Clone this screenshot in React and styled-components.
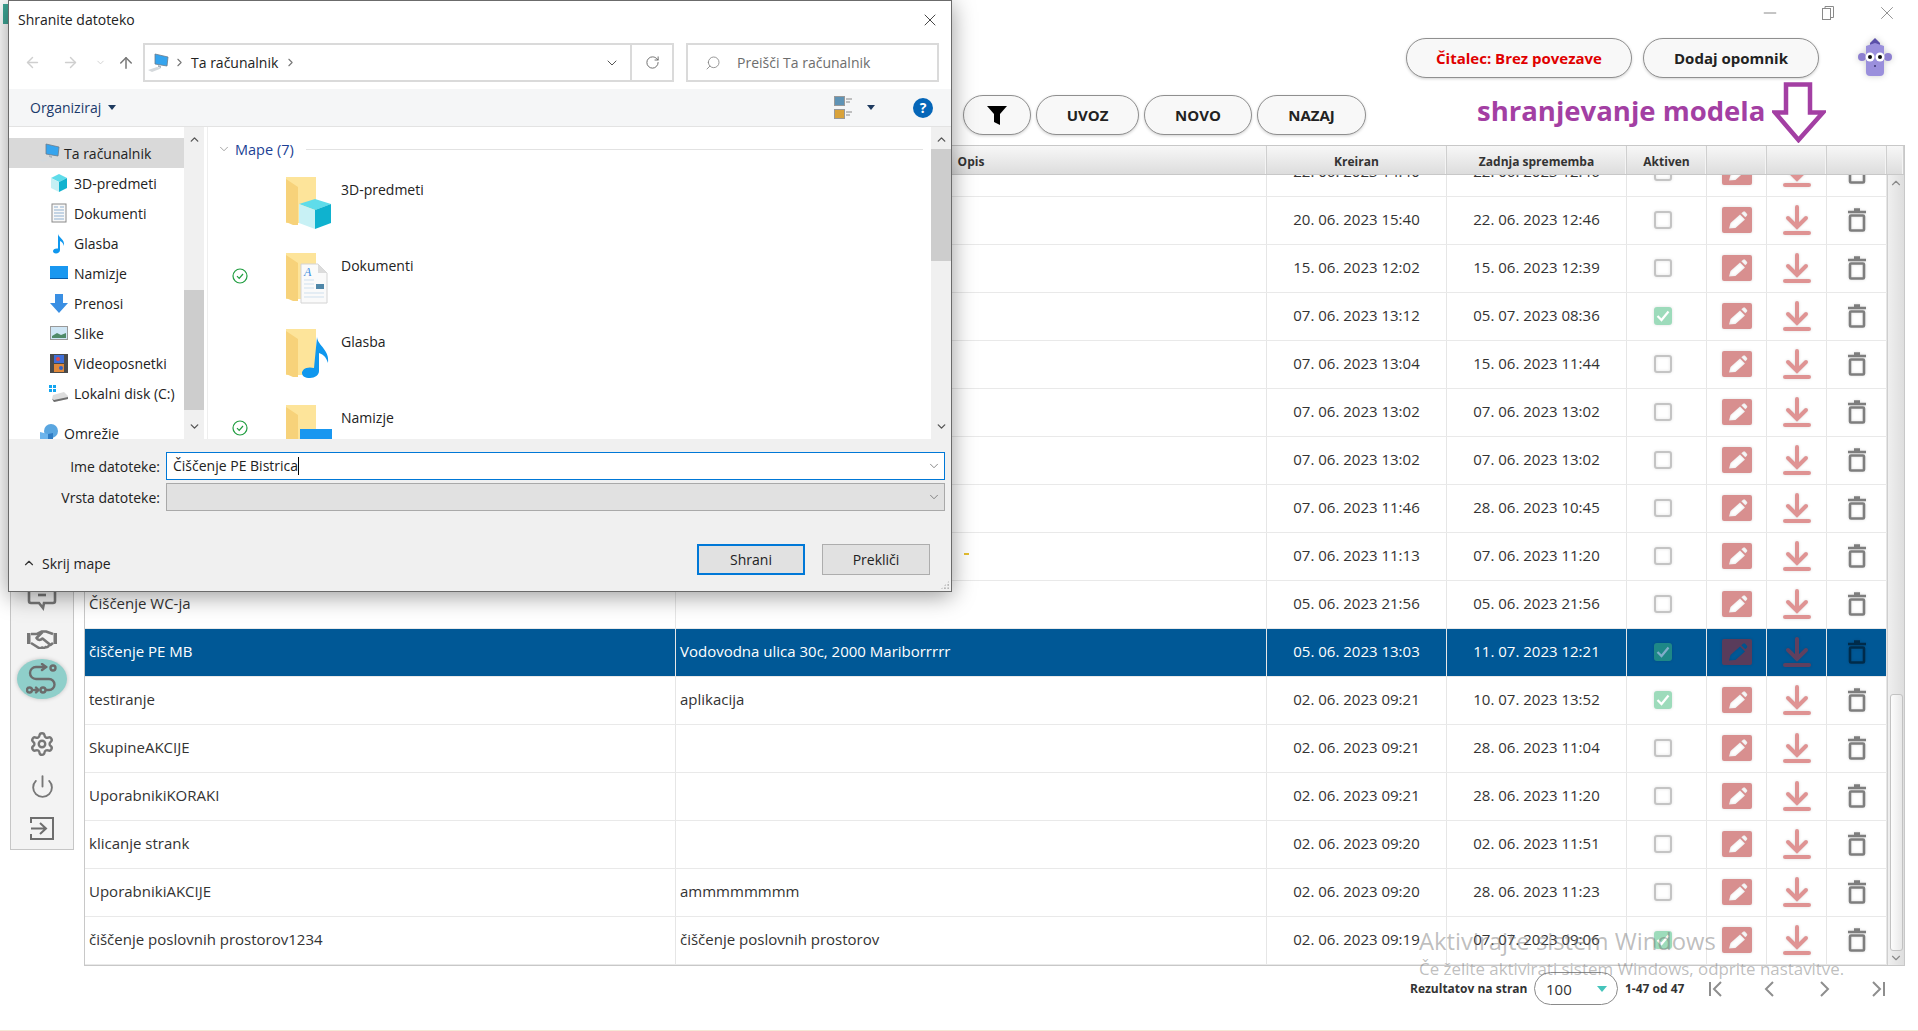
import styled, { createGlobalStyle } from "styled-components";
import { ArrowLeft, ArrowRight, ArrowUp, ChevronDown, ChevronUp, ChevronRight, RotateCw, Search, X, Minus, Settings, Power } from "lucide-react";

const rows = [
  { created: "22. 06. 2023 14:40", changed: "22. 06. 2023 12:46" },
  { created: "20. 06. 2023 15:40", changed: "22. 06. 2023 12:46" },
  { created: "15. 06. 2023 12:02", changed: "15. 06. 2023 12:39" },
  { created: "07. 06. 2023 13:12", changed: "05. 07. 2023 08:36", active: true },
  { created: "07. 06. 2023 13:04", changed: "15. 06. 2023 11:44" },
  { created: "07. 06. 2023 13:02", changed: "07. 06. 2023 13:02" },
  { created: "07. 06. 2023 13:02", changed: "07. 06. 2023 13:02" },
  { created: "07. 06. 2023 11:46", changed: "28. 06. 2023 10:45" },
  { created: "07. 06. 2023 11:13", changed: "07. 06. 2023 11:20" },
  { name: "Čiščenje WC-ja", created: "05. 06. 2023 21:56", changed: "05. 06. 2023 21:56" },
  { name: "čiščenje PE MB", desc: "Vodovodna ulica 30c, 2000 Mariborrrrr", created: "05. 06. 2023 13:03", changed: "11. 07. 2023 12:21", active: true, selected: true },
  { name: "testiranje", desc: "aplikacija", created: "02. 06. 2023 09:21", changed: "10. 07. 2023 13:52", active: true },
  { name: "SkupineAKCIJE", created: "02. 06. 2023 09:21", changed: "28. 06. 2023 11:04" },
  { name: "UporabnikiKORAKI", created: "02. 06. 2023 09:21", changed: "28. 06. 2023 11:20" },
  { name: "klicanje strank", created: "02. 06. 2023 09:20", changed: "02. 06. 2023 11:51" },
  { name: "UporabnikiAKCIJE", desc: "ammmmmmmm", created: "02. 06. 2023 09:20", changed: "28. 06. 2023 11:23" },
  { name: "čiščenje poslovnih prostorov1234", desc: "čiščenje poslovnih prostorov", created: "02. 06. 2023 09:19", changed: "07. 07. 2023 09:06", active: true },
];

const navItems = [
  { label: "Ta računalnik", icon: "computer", top: true, current: true },
  { label: "3D-predmeti", icon: "cube" },
  { label: "Dokumenti", icon: "doc" },
  { label: "Glasba", icon: "note" },
  { label: "Namizje", icon: "desktop" },
  { label: "Prenosi", icon: "download" },
  { label: "Slike", icon: "image" },
  { label: "Videoposnetki", icon: "film" },
  { label: "Lokalni disk (C:)", icon: "disk" },
  { label: "Omrežie", icon: "network", top: true, spaced: true },
];

const folders = [
  { label: "3D-predmeti", kind: "cube" },
  { label: "Dokumenti", kind: "doc", synced: true },
  { label: "Glasba", kind: "note" },
  { label: "Namizje", kind: "desktop", synced: true },
];

const NavIcon = ({ kind }) => {
  switch (kind) {
    case "computer":
      return (
        <svg width="22" height="20" viewBox="0 0 22 20">
          <path d="M8 1l13 3-1 9-12-2z" fill="#35a4ee" stroke="#6d7c8a" strokeWidth="0.8" />
          <path d="M11 12l3 1v2l-3-1z" fill="#a9b4bd" />
          <path d="M1 17l9-3 4 1.500-9 3.500z" fill="#d5d9dc" />
        </svg>
      );
    case "cube":
      return (
        <svg width="20" height="20" viewBox="0 0 20 20">
          <path d="M10 1l8 4-8 4-8-4z" fill="#5fdcea" />
          <path d="M2 5l8 4v10l-8-4z" fill="#c5f0f4" />
          <path d="M18 5l-8 4v10l8-4z" fill="#10b3cf" />
        </svg>
      );
    case "doc":
      return (
        <svg width="16" height="20" viewBox="0 0 16 20">
          <rect x="1" y="1" width="14" height="18" fill="#f8f8f8" stroke="#8a8a8a" />
          <path d="M3 4h4M9 4h4M3 7h10M3 10h10M3 13h10M3 16h10" stroke="#8fb0d0" />
        </svg>
      );
    case "note":
      return (
        <svg width="14" height="21" viewBox="0 0 14 21">
          <path d="M6 1c1 4 7 5 6 12-1-3-2-4-4-5v9c0 2-2 3.500-4 3.500s-3-1-3-2.500 2-3 5-2.500z" fill="#0f97ee" />
        </svg>
      );
    case "desktop":
      return (
        <svg width="19" height="14" viewBox="0 0 19 14">
          <rect width="18" height="13" fill="#1997f0" />
          <rect y="12" width="18" height="1" fill="#0a5ca8" />
        </svg>
      );
    case "download":
      return (
        <svg width="18" height="19" viewBox="0 0 18 19">
          <path d="M5 0h8v9h5l-9 10-9-10h5z" fill="#3a8fe3" />
        </svg>
      );
    case "image":
      return (
        <svg width="18" height="14" viewBox="0 0 18 14">
          <rect x="0.500" y="0.500" width="17" height="13" fill="#cfe6f5" stroke="#999" />
          <path d="M2 10l5-3 4 2 5-2v5H2z" fill="#4f8a68" />
        </svg>
      );
    case "film":
      return (
        <svg width="18" height="19" viewBox="0 0 18 19">
          <rect width="18" height="19" fill="#4a4a4a" />
          <rect x="4" y="1" width="10" height="8" fill="#3f6fd8" />
          <rect x="4" y="10" width="10" height="8" fill="#e0883a" />
          <circle cx="8" cy="5" r="2" fill="#e04a4a" />
          <circle cx="11" cy="14" r="2" fill="#2f62c8" />
        </svg>
      );
    case "disk":
      return (
        <svg width="20" height="17" viewBox="0 0 20 17">
          <path d="M0 0h3v3H0zM4 0h3v3H4zM0 4h3v3H0zM4 4h3v3H4z" fill="#12a5f0" />
          <path d="M4 10l11-3 4 4v3l-14 3-2-3z" fill="#dcdcdc" />
          <path d="M3 14l2 3 14-3v-2l-14 3z" fill="#6e6e6e" />
        </svg>
      );
    default:
      return (
        <svg width="20" height="20" viewBox="0 0 20 20">
          <circle cx="12" cy="8" r="7" fill="#5aa6e0" />
          <path d="M1 9l8 2v8l-8-3z" fill="#6cb4ec" />
          <path d="M9 11l5-1v7l-5 2z" fill="#2f7cc4" />
        </svg>
      );
  }
};

const FolderIcon = ({ kind }) => (
  <svg width="50" height="52" viewBox="0 0 50 52">
    <rect x="1" y="0" width="30" height="46" fill="#fde49a" />
    <path d="M1 0l12 8v38H8l-7-3z" fill="#f7d27a" transform="translate(0 2)" />
    {kind === "cube" && (
      <g>
        <path d="M30 22l16 5-16 6-16-6z" fill="#5fdcea" />
        <path d="M14 27l16 6v19l-16-6z" fill="#c8f1f5" />
        <path d="M46 27l-16 6v19l16-6z" fill="#0fb2cf" />
      </g>
    )}
    {kind === "doc" && (
      <g>
        <path d="M16 11h17l9 9v30H16z" fill="#fafafa" stroke="#d4d4d4" />
        <path d="M33 11l9 9h-9z" fill="#dcdcdc" />
        <text x="19" y="23" fontSize="12" fontStyle="italic" fontFamily="Liberation Serif, serif" fill="#3f8ee0">A</text>
        <path d="M31 31h8v5h-8z" fill="#4f87a8" />
        <path d="M19 27h10M19 31h10M19 35h10M19 40h20M19 44h20" stroke="#cfe0ee" />
      </g>
    )}
    {kind === "note" && (
      <path d="M32 8c1 9 13 13 11 26-2-6-4-8-9-10v18c0 4-4 7-9 7s-8-2-8-5 4-7 12-5z" fill="#0f97ee" />
    )}
    {kind === "desktop" && <rect x="15" y="24" width="32" height="28" fill="#1997f0" />}
  </svg>
);

const SyncedIcon = () => (
  <svg width="16" height="16" viewBox="0 0 16 16">
    <circle cx="8" cy="8" r="7" fill="none" stroke="#1f9d3f" strokeWidth="1.200" />
    <path d="M5 8.200l2.200 2.200L11 6" fill="none" stroke="#1f9d3f" strokeWidth="1.200" />
  </svg>
);

const EditIcon = () => (
  <svg width="30" height="26" viewBox="0 0 30 26">
    <path
      fillRule="evenodd"
      fill="#b22222"
      d="M2 0h26a2 2 0 0 1 2 2v22a2 2 0 0 1-2 2H2a2 2 0 0 1-2-2V2a2 2 0 0 1 2-2zM7 21.500l1.500-5.500 9.500-8.500 5 5-9.500 8.500zM19.300 6.300l1.800-1.500a1.500 1.500 0 0 1 2 0l1.800 1.900a1.500 1.500 0 0 1 0 2l-1.600 1.500z"
    />
  </svg>
);

const DownloadIcon = () => (
  <svg width="28" height="30" viewBox="0 0 28 30">
    <path d="M14 2v20M5 13l9 9 9-9" fill="none" stroke="#c02a2a" strokeWidth="4" strokeLinecap="round" />
    <path d="M2 28h24" fill="none" stroke="#c02a2a" strokeWidth="4" strokeLinecap="round" />
  </svg>
);

const TrashIcon = () => (
  <svg width="18" height="24" viewBox="0 0 18 24">
    <path d="M6 1.500h6M0 4h18" stroke="#000" strokeWidth="2.400" />
    <rect x="2" y="7.500" width="14" height="15" rx="1" fill="none" stroke="#000" strokeWidth="2.600" />
  </svg>
);

const FunnelIcon = () => (
  <svg width="20" height="19" viewBox="0 0 20 19">
    <path d="M0 0h20l-7 8v11l-6-3V8z" fill="#000" />
  </svg>
);

const RestoreIcon = () => (
  <svg width="12" height="14" viewBox="0 0 12 14" fill="none" stroke="#8a8a8a">
    <rect x="0.500" y="2.500" width="8" height="11" />
    <path d="M3 2.500v-2h8.500v11h-3" />
  </svg>
);

const CommentIcon = () => (
  <svg width="30" height="24" viewBox="0 0 30 24" fill="none" stroke="#777" strokeWidth="2.600">
    <path d="M2 1v13a2 2 0 0 0 2 2h8l4 5 1-5h9a2 2 0 0 0 2-2V1" />
    <path d="M11 8h8" />
  </svg>
);

const HandshakeIcon = () => (
  <svg width="30" height="19" viewBox="0 0 30 19" fill="none" stroke="#777" strokeWidth="2.600" strokeLinejoin="round">
    <path d="M0 3h3.500v11H0zM30 3h-3.500v11H30z" fill="#777" stroke="none" />
    <path d="M4 4h6l5-2.500h4l7 2.500" />
    <path d="M15.500 2L9.500 8c1.500 2.500 4 2.500 6 .5l8 6.500 2.500-2" />
    <path d="M4 13l8 5c1 .5 2.500 0 3-.5 1 .5 3 .5 3.500-.5 1.500.5 3 0 3.500-2" />
  </svg>
);

const RouteIcon = () => (
  <svg width="32" height="32" viewBox="0 0 32 32" fill="none" stroke="#6b6b6b" strokeWidth="2.400" strokeLinecap="round">
    <path d="M20 4H10a6 6 0 0 0 0 12h13a5 5 0 0 1 0 11h-3" />
    <path d="M16 1l4 3-4 3" />
    <circle cx="27" cy="5" r="2.500" />
    <circle cx="17" cy="27" r="2.500" />
    <circle cx="3.500" cy="27" r="2.500" />
    <path d="M8 27h3M10 24.500l2.500 2.500-2.500 2.500" />
  </svg>
);

const ExitIcon = () => (
  <svg width="24" height="23" viewBox="0 0 24 23" fill="none" stroke="#6e6e6e" strokeWidth="2">
    <path d="M1 6V1h22v21H1v-5" />
    <path d="M1 11.500h14M10 6l6 5.500-6 5.500" />
  </svg>
);

const PagerIcon = ({ d }) => (
  <svg width="16" height="16" viewBox="0 0 16 16" fill="none" stroke="#8e8e8e" strokeWidth="2">
    <path d={d} />
  </svg>
);

const App = () => (
  <Page>
    <GlobalStyle />
    <AppEdge />
    <Sidebar>
      <SideSlot>
        <CommentIcon />
      </SideSlot>
      <SideSlot>
        <HandshakeIcon />
      </SideSlot>
      <SideSlot>
        <ActiveBubble>
          <RouteIcon />
        </ActiveBubble>
      </SideSlot>
      <SideGap />
      <SideSlot $tall>
        <Settings size={26} color="#777" strokeWidth={2.200} />
      </SideSlot>
      <SideSlot $tall>
        <Power size={25} color="#777" strokeWidth={1.800} />
      </SideSlot>
      <SideSlot $tall>
        <ExitIcon />
      </SideSlot>
    </Sidebar>

    <Main>
      <WindowBar>
        <Minus size={20} color="#8a8a8a" strokeWidth={1.200} />
        <RestoreIcon />
        <X size={22} color="#8a8a8a" strokeWidth={1} />
      </WindowBar>

      <HeaderRow>
        <Pill $width={226} $red>
          Čitalec: Brez povezave
        </Pill>
        <Pill $width={176}>Dodaj opomnik</Pill>
        <Mascot>
          <svg width="34" height="38" viewBox="0 0 34 38">
            <path d="M17 0l5 5v3H12V5z" fill="#5b4fa8" />
            <circle cx="4" cy="19" r="4" fill="#8d7fd0" />
            <circle cx="30" cy="19" r="4" fill="#8d7fd0" />
            <path d="M8 8l9-3 9 3v26a4 4 0 0 1-4 4H12a4 4 0 0 1-4-4z" fill="#9a8fdc" />
            <circle cx="12" cy="19" r="4.500" fill="#fff" />
            <circle cx="22" cy="19" r="4.500" fill="#fff" />
            <circle cx="12" cy="19" r="2" fill="#111" />
            <circle cx="22" cy="19" r="2" fill="#111" />
            <path d="M16 28h2" stroke="#3a3370" strokeWidth="1.500" />
          </svg>
        </Mascot>
      </HeaderRow>

      <ActionsRow>
        <Pill $width={68}>
          <FunnelIcon />
        </Pill>
        <Pill $width={103}>UVOZ</Pill>
        <Pill $width={108}>NOVO</Pill>
        <Pill $width={109}>NAZAJ</Pill>
        <Annotation>shranjevanje modela</Annotation>
        <svg width="54" height="61" viewBox="0 0 54 61">
          <path d="M14 2.500h24v28h13L26.500 58 3 30.500h11z" fill="none" stroke="#a33fa3" strokeWidth="4.500" />
        </svg>
      </ActionsRow>

      <TableBox>
        <TableHead>
          <HeadCell />
          <HeadCell>Opis</HeadCell>
          <HeadCell>Kreiran</HeadCell>
          <HeadCell>Zadnja sprememba</HeadCell>
          <HeadCell>Aktiven</HeadCell>
          <HeadCell />
          <HeadCell />
          <HeadCell />
          <HeadCell />
        </TableHead>
        <TableBody>
          <RowsClip>
            <RowsList>
              {rows.map((row, i) => (
                <Row key={i} $selected={row.selected}>
                  <TextCell>{row.name}</TextCell>
                  <TextCell>{row.desc}</TextCell>
                  <DateCell>{row.created}</DateCell>
                  <DateCell>{row.changed}</DateCell>
                  <IconCell>
                    <CheckBox $checked={row.active}>
                      {row.active && (
                        <svg width="14" height="12" viewBox="0 0 14 12">
                          <path d="M1.500 6l4 4 7-8.500" fill="none" stroke="#fff" strokeWidth="2.200" />
                        </svg>
                      )}
                    </CheckBox>
                  </IconCell>
                  <IconCell>
                    <EditIcon />
                  </IconCell>
                  <IconCell>
                    <DownloadIcon />
                  </IconCell>
                  <IconCell>
                    <TrashIcon />
                  </IconCell>
                </Row>
              ))}
            </RowsList>
          </RowsClip>
          <ScrollTrack>
            <ChevronUp size={14} color="#8a8a8a" />
            <ScrollThumb />
            <ChevronDown size={14} color="#8a8a8a" />
          </ScrollTrack>
        </TableBody>
      </TableBox>

      <Pager>
        <PagerLabel>Rezultatov na stran</PagerLabel>
        <PageSize>
          100
          <PageSizeArrow />
        </PageSize>
        <PagerCount>1-47 od 47</PagerCount>
        <PagerButtons>
          <PagerIcon d="M2 1v14M13 1L6 8l7 7" />
          <PagerIcon d="M11 1L4 8l7 7" />
          <PagerIcon d="M5 1l7 7-7 7" />
          <PagerIcon d="M3 1l7 7-7 7M14 1v14" />
        </PagerButtons>
      </Pager>
    </Main>

    <StrayMark />

    <Watermark>
      <WatermarkTitle>Aktivirajte sistem Windows</WatermarkTitle>
      <WatermarkText>Če želite aktivirati sistem Windows, odprite nastavitve.</WatermarkText>
    </Watermark>

    <Dialog>
      <DialogTitle>
        Shranite datoteko
        <X size={20} color="#222" strokeWidth={1} />
      </DialogTitle>

      <AddressRow>
        <NavArrows>
          <ArrowLeft size={17} color="#cfcfcf" />
          <ArrowRight size={17} color="#cfcfcf" />
          <ChevronDown size={11} color="#cfcfcf" />
          <ArrowUp size={18} color="#777" />
        </NavArrows>
        <AddressBox>
          <NavIcon kind="computer" />
          <ChevronRight size={13} color="#777" />
          <AddressText>Ta računalnik</AddressText>
          <ChevronRight size={13} color="#777" />
          <AddressChevron>
            <ChevronDown size={16} color="#555" strokeWidth={1.500} />
          </AddressChevron>
          <AddressRefresh>
            <RotateCw size={15} color="#666" strokeWidth={1.500} />
          </AddressRefresh>
        </AddressBox>
        <SearchBox>
          <Search size={16} color="#888" strokeWidth={1.300} style={{ transform: "scaleX(-1)" }} />
          Preišči Ta računalnik
        </SearchBox>
      </AddressRow>

      <DialogToolbar>
        <Organize>
          Organiziraj <Caret />
        </Organize>
        <ToolbarRight>
          <svg width="19" height="24" viewBox="0 0 19 24">
            <rect x="0.500" y="0.500" width="10" height="9" fill="#5f93b5" stroke="#999" />
            <rect x="0.500" y="13.500" width="10" height="9" fill="#d9a23a" stroke="#999" />
            <path d="M12 3h6M12 6h4M12 16h6M12 19h4" stroke="#888" />
          </svg>
          <Caret />
          <HelpBadge>?</HelpBadge>
        </ToolbarRight>
      </DialogToolbar>

      <Panels>
        <NavPane>
          {navItems.map((item) => (
            <NavRow key={item.label} $top={item.top} $current={item.current} $spaced={item.spaced}>
              <NavIconSlot>
                <NavIcon kind={item.icon} />
              </NavIconSlot>
              {item.label}
            </NavRow>
          ))}
        </NavPane>
        <PaneScroll>
          <ChevronUp size={13} color="#555" strokeWidth={2.500} />
          <PaneThumb $top={144} $height={120} />
          <ChevronDown size={13} color="#555" strokeWidth={2.500} />
        </PaneScroll>
        <FolderPane>
          <GroupTitle>
            <ChevronDown size={14} color="#888" strokeWidth={1.300} />
            Mape (7)
            <GroupLine />
          </GroupTitle>
          {folders.map((folder) => (
            <FolderRow key={folder.label}>
              <SyncSlot>{folder.synced && <SyncedIcon />}</SyncSlot>
              <FolderIcon kind={folder.kind} />
              <FolderLabel>{folder.label}</FolderLabel>
            </FolderRow>
          ))}
        </FolderPane>
        <PaneScroll>
          <ChevronUp size={13} color="#555" strokeWidth={2.500} />
          <PaneThumb $top={3} $height={112} />
          <ChevronDown size={13} color="#555" strokeWidth={2.500} />
        </PaneScroll>
      </Panels>

      <DialogFooter>
        <FieldGrid>
          <FieldLabel>Ime datoteke:</FieldLabel>
          <FieldBox $focused>
            Čiščenje PE Bistrica
            <Cursor />
            <FieldChevron>
              <ChevronDown size={14} color="#666" strokeWidth={1.300} />
            </FieldChevron>
          </FieldBox>
          <FieldLabel>Vrsta datoteke:</FieldLabel>
          <FieldBox>
            <FieldChevron>
              <ChevronDown size={14} color="#666" strokeWidth={1.300} />
            </FieldChevron>
          </FieldBox>
        </FieldGrid>
        <FooterActions>
          <HideFolders>
            <ChevronUp size={14} color="#333" strokeWidth={2} />
            Skrij mape
          </HideFolders>
          <DialogButton $primary>Shrani</DialogButton>
          <DialogButton>Prekliči</DialogButton>
        </FooterActions>
        <Grip />
      </DialogFooter>
    </Dialog>
  </Page>
);

const GlobalStyle = createGlobalStyle`
  html, body {
    margin: 0;
    padding: 0;
    background: #fff;
  }
  * {
    box-sizing: border-box;
  }
`;

const Page = styled.div`
  position: relative;
  width: 1918px;
  height: 1031px;
  overflow: hidden;
  display: flex;
  align-items: flex-start;
  background: #fff;
  border-bottom: 1px solid #f4e8d6;
  font-family: "Open Sans", "Noto Sans", sans-serif;
  color: #333;
`;

const AppEdge = styled.div`
  position: absolute;
  left: 3px;
  top: 4px;
  width: 6px;
  height: 20px;
  background: #3fa796;
`;

const Sidebar = styled.aside`
  flex: none;
  width: 64px;
  height: 850px;
  margin-left: 10px;
  display: flex;
  flex-direction: column;
  justify-content: flex-end;
  background: #f3f3f3;
  border: 1px solid #c6c6c6;
  border-top: none;
`;

const SideSlot = styled.div`
  height: ${(p) => (p.$tall ? "42px" : "40px")};
  display: flex;
  align-items: center;
  justify-content: center;
`;

const SideGap = styled.div`
  height: 24px;
`;

const ActiveBubble = styled.div`
  width: 50px;
  height: 40px;
  border-radius: 50%;
  display: flex;
  align-items: center;
  justify-content: center;
  background: #8fcfca;
  box-shadow: 0 0 4px rgba(0, 0, 0, 0.2);
`;

const Main = styled.main`
  flex: 1;
  min-width: 0;
  padding-left: 10px;
  padding-right: 13px;
`;

const WindowBar = styled.div`
  height: 26px;
  margin-right: -13px;
  padding-right: 20px;
  display: flex;
  align-items: center;
  justify-content: flex-end;
  gap: 42px;
`;

const HeaderRow = styled.div`
  height: 40px;
  margin-top: 12px;
  padding-right: 13px;
  display: flex;
  justify-content: flex-end;
  gap: 11px;
`;

const Pill = styled.button`
  flex: none;
  width: ${(p) => p.$width}px;
  height: 40px;
  padding: 0;
  display: flex;
  align-items: center;
  justify-content: center;
  background: #f8f8f8;
  border: 1.5px solid #8f8f8f;
  border-radius: 20px;
  box-shadow: 0 1px 3px rgba(0, 0, 0, 0.18);
  font-family: inherit;
  font-size: 15px;
  font-weight: 700;
  color: ${(p) => (p.$red ? "#e00000" : "#222")};
`;

const Mascot = styled.div`
  width: 34px;
  height: 38px;
  margin-left: 28px;
  margin-right: 0;
  display: flex;
  filter: drop-shadow(0 0 3px rgba(0, 0, 0, 0.2));
`;

const ActionsRow = styled.div`
  height: 63px;
  margin-top: 4px;
  padding-left: 879px;
  display: flex;
  align-items: flex-start;
  gap: 5px;

  & > ${Pill} {
    margin-top: 13px;
  }
`;

const Annotation = styled.div`
  margin-left: 106px;
  margin-top: 9px;
  margin-right: -1px;
  width: 291px;
  font-size: 27.500px;
  font-weight: 700;
  line-height: 40px;
  white-space: nowrap;
  color: #a33fa3;
`;

const columns = "591px 591px 180px 180px 80px 60px 60px 60px";

const TableBox = styled.section`
  border: 1px solid #c8c8c8;
  height: 821px;
`;

const TableHead = styled.div`
  height: 29px;
  display: grid;
  grid-template-columns: ${columns} 17px;
  background: linear-gradient(#f7f7f7, #dddddd);
  border-bottom: 1px solid #c8c8c8;
`;

const HeadCell = styled.div`
  padding-top: 2px;
  display: flex;
  align-items: center;
  justify-content: center;
  border-right: 1px solid #cfcfcf;
  box-shadow: inset -1px 0 0 #f4f4f4;
  font-size: 12px;
  font-weight: 700;
  color: #333;
`;

const TableBody = styled.div`
  height: 790px;
  display: flex;
`;

const RowsClip = styled.div`
  flex: 1;
  overflow: hidden;
`;

const RowsList = styled.div`
  margin-top: -26px;
`;

const Row = styled.div`
  height: 48px;
  display: grid;
  grid-template-columns: ${columns};
  border-bottom: 1px solid #e9e9e9;
  background: ${(p) => (p.$selected ? "#005896" : "#fff")};
  color: ${(p) => (p.$selected ? "#fff" : "#333")};
`;

const TextCell = styled.div`
  display: flex;
  align-items: center;
  padding-left: 4px;
  padding-bottom: 3px;
  border-right: 1px solid #e6e6e6;
  font-size: 15px;
  white-space: nowrap;
`;

const DateCell = styled(TextCell)`
  justify-content: center;
  padding-left: 0;
`;

const IconCell = styled.div`
  display: flex;
  align-items: center;
  justify-content: center;
  padding-bottom: 2px;
  border-right: 1px solid #e6e6e6;

  & > * {
    opacity: 0.5;
    filter: drop-shadow(0 0 1.500px rgba(0, 0, 0, 0.25));
  }
`;

const CheckBox = styled.div`
  width: 18px;
  height: 18px;
  margin-right: 8px;
  display: flex;
  align-items: center;
  justify-content: center;
  border-radius: 3px;
  background: ${(p) => (p.$checked ? "#3db979" : "transparent")};
  border: ${(p) => (p.$checked ? "none" : "2px solid #8a8a8a")};
`;

const ScrollTrack = styled.div`
  flex: none;
  width: 17px;
  display: flex;
  flex-direction: column;
  align-items: center;
  background: linear-gradient(90deg, #efefef, #dedede);
  border-left: 1px solid #cfcfcf;
  padding-top: 1px;
`;

const ScrollThumb = styled.div`
  flex: none;
  width: 13px;
  height: 257px;
  margin-top: auto;
  background: linear-gradient(90deg, #fcfcfc, #e8e8e8);
  border: 1px solid #c2c2c2;
  border-radius: 3px;
`;

const Pager = styled.div`
  height: 33px;
  margin-top: 6px;
  padding-left: 1326px;
  display: flex;
  align-items: center;
  font-size: 12px;
  font-weight: 700;
  color: #333;
`;

const PagerLabel = styled.span`
  width: 124px;
  white-space: nowrap;
`;

const PageSize = styled.div`
  position: relative;
  flex: none;
  width: 84px;
  height: 33px;
  padding-left: 11px;
  display: flex;
  align-items: center;
  border: 1px solid #8a8a8a;
  border-radius: 17px;
  font-size: 15px;
  font-weight: 400;
`;

const PageSizeArrow = styled.span`
  position: absolute;
  right: 10px;
  top: 13px;
  width: 0;
  height: 0;
  border-left: 5px solid transparent;
  border-right: 5px solid transparent;
  border-top: 6px solid #45c4bb;
`;

const PagerCount = styled.span`
  margin-left: 7px;
  width: 83px;
  white-space: nowrap;
`;

const PagerButtons = styled.div`
  display: flex;
  gap: 38px;
`;

const StrayMark = styled.div`
  position: absolute;
  left: 964px;
  top: 553px;
  width: 5px;
  height: 2px;
  background: #e8c030;
`;

const Watermark = styled.div`
  position: absolute;
  left: 1419px;
  top: 924px;
  pointer-events: none;
  white-space: nowrap;
  color: rgba(110, 110, 110, 0.45);
`;

const WatermarkTitle = styled.div`
  font-size: 23.800px;
  line-height: 34px;
`;

const WatermarkText = styled.div`
  font-size: 16.900px;
  line-height: 22px;
`;

const Dialog = styled.div`
  position: absolute;
  left: 8px;
  top: 0;
  width: 944px;
  height: 592px;
  display: flex;
  flex-direction: column;
  background: #fff;
  border: 1px solid #6b6b6b;
  box-shadow: 0 4px 22px rgba(0, 0, 0, 0.4);
  font-size: 14px;
  color: #222;
`;

const DialogTitle = styled.div`
  flex: none;
  height: 39px;
  padding: 0 11px 2px 9px;
  display: flex;
  align-items: center;
  justify-content: space-between;
  font-size: 14px;
`;

const AddressRow = styled.div`
  flex: none;
  height: 49px;
  padding-top: 3px;
  display: flex;
  align-items: flex-start;
`;

const NavArrows = styled.div`
  width: 134px;
  height: 39px;
  padding-left: 15px;
  display: flex;
  align-items: center;

  & > svg:nth-child(2) {
    margin-left: 21px;
  }
  & > svg:nth-child(3) {
    margin-left: 16px;
  }
  & > svg:nth-child(4) {
    margin-left: 11px;
  }
`;

const AddressBox = styled.div`
  width: 531px;
  height: 39px;
  padding-left: 2px;
  display: flex;
  align-items: center;
  gap: 4px;
  border: 2px solid #dadada;
`;

const AddressText = styled.span`
  font-size: 14px;
  margin: 0 2px 0 1px;
`;

const AddressChevron = styled.span`
  margin-left: auto;
  width: 26px;
  display: flex;
`;

const AddressRefresh = styled.span`
  flex: none;
  width: 42px;
  height: 100%;
  margin-left: -4px;
  display: flex;
  align-items: center;
  justify-content: center;
  border-left: 2px solid #dadada;
`;

const SearchBox = styled.div`
  width: 253px;
  height: 39px;
  margin-left: 12px;
  padding-left: 17px;
  display: flex;
  align-items: center;
  gap: 16px;
  border: 2px solid #dadada;
  color: #6d6d6d;
`;

const DialogToolbar = styled.div`
  flex: none;
  height: 38px;
  padding: 0 18px 0 21px;
  display: flex;
  align-items: center;
  justify-content: space-between;
  background: #f5f6f7;
  border-bottom: 1px solid #e3e3e3;
`;

const Organize = styled.div`
  display: flex;
  align-items: center;
  gap: 7px;
  color: #1a3a6b;
`;

const Caret = styled.span`
  width: 0;
  height: 0;
  border-left: 4px solid transparent;
  border-right: 4px solid transparent;
  border-top: 5px solid #1e3a5f;
`;

const ToolbarRight = styled.div`
  display: flex;
  align-items: center;
  gap: 14px;

  & > ${Caret} {
    margin-right: 24px;
  }
`;

const HelpBadge = styled.div`
  width: 20px;
  height: 20px;
  display: flex;
  align-items: center;
  justify-content: center;
  border-radius: 50%;
  background: #0566b8;
  color: #fff;
  font-size: 14px;
  font-weight: 700;
`;

const Panels = styled.div`
  flex: none;
  height: 312px;
  display: flex;
  overflow: hidden;
`;

const NavPane = styled.nav`
  flex: none;
  width: 175px;
  padding-top: 11px;
  overflow: hidden;
`;

const NavRow = styled.div`
  height: 30px;
  margin-top: ${(p) => (p.$spaced ? "10px" : "0")};
  padding-left: ${(p) => (p.$top ? "31px" : "41px")};
  display: flex;
  align-items: center;
  white-space: nowrap;
  font-size: 14px;
  background: ${(p) => (p.$current ? "#d9d9d9" : "transparent")};
`;

const NavIconSlot = styled.span`
  width: 24px;
  margin-left: -3px;
  margin-right: 3px;
  display: flex;
  justify-content: center;
`;

const PaneScroll = styled.div`
  position: relative;
  flex: none;
  width: 20px;
  display: flex;
  flex-direction: column;
  align-items: center;
  justify-content: space-between;
  padding: 6px 0;
  background: #f0f0f0;
`;

const PaneThumb = styled.div`
  position: absolute;
  left: 0;
  right: 0;
  top: ${(p) => p.$top + 19}px;
  height: ${(p) => p.$height}px;
  background: #cdcdcd;
`;

const FolderPane = styled.div`
  flex: 1;
  min-width: 0;
  margin-left: 3px;
  padding: 10px 8px 0 9px;
  overflow: hidden;
  background: #fff;
  border-left: 1px solid #eee;
`;

const GroupTitle = styled.div`
  height: 24px;
  margin-bottom: 16px;
  display: flex;
  align-items: center;
  gap: 4px;
  color: #1c3f95;
  font-size: 14.500px;
`;

const GroupLine = styled.div`
  flex: 1;
  height: 1px;
  margin-left: 8px;
  background: #e2e2e2;
`;

const FolderRow = styled.div`
  height: 76px;
  margin-top: 4px;
  margin-bottom: -4px;
  padding-left: 15px;
  display: flex;
  align-items: flex-start;
`;

const SyncSlot = styled.div`
  width: 53px;
  height: 52px;
  padding-top: 15px;
  display: flex;
  flex: none;
`;

const FolderLabel = styled.div`
  margin-left: 6px;
  margin-top: 3px;
  font-size: 14px;
`;

const DialogFooter = styled.div`
  position: relative;
  flex: 1;
  padding-top: 13px;
  background: #f0f0f0;
`;

const FieldGrid = styled.div`
  display: grid;
  grid-template-columns: 151px 779px;
  grid-auto-rows: 28px;
  column-gap: 6px;
  row-gap: 3px;
`;

const FieldLabel = styled.div`
  display: flex;
  align-items: center;
  justify-content: flex-end;
  font-size: 14px;
`;

const FieldBox = styled.div`
  position: relative;
  padding-left: 6px;
  padding-bottom: 1px;
  display: flex;
  align-items: center;
  background: ${(p) => (p.$focused ? "#fff" : "#e1e1e1")};
  border: 1px solid ${(p) => (p.$focused ? "#0078d7" : "#a9a9a9")};
  font-size: 14px;
`;

const Cursor = styled.span`
  width: 1px;
  height: 18px;
  background: #000;
`;

const FieldChevron = styled.span`
  position: absolute;
  right: 3px;
  top: 6px;
  display: flex;
`;

const FooterActions = styled.div`
  margin-top: 33px;
  padding-left: 13px;
  padding-right: 21px;
  display: flex;
  align-items: center;
  gap: 17px;
`;

const HideFolders = styled.div`
  margin-right: auto;
  margin-top: 7px;
  display: flex;
  align-items: center;
  gap: 6px;
  font-size: 14px;
`;

const DialogButton = styled.div`
  width: 108px;
  height: 31px;
  display: flex;
  align-items: center;
  justify-content: center;
  background: #e1e1e1;
  border: ${(p) => (p.$primary ? "2px solid #0078d7" : "1px solid #adadad")};
  font-size: 14px;
`;

const Grip = styled.div`
  position: absolute;
  right: 1px;
  bottom: 1px;
  width: 10px;
  height: 10px;
  background: radial-gradient(circle, #b5b5b5 1px, transparent 1.200px) 0 0 / 3.300px 3.300px;
  clip-path: polygon(100% 0, 100% 100%, 0 100%);
`;

export default App;
